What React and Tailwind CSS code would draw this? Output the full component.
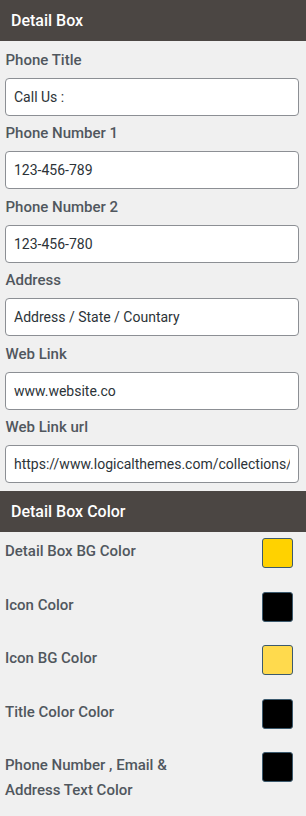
import React from 'react';

const fields = [
  { label: 'Phone Title', value: 'Call Us :' },
  { label: 'Phone Number 1', value: '123-456-789' },
  { label: 'Phone Number 2', value: '123-456-780' },
  { label: 'Address', value: 'Address / State / Countary' },
  { label: 'Web Link', value: 'www.website.co' },
  { label: 'Web Link url', value: 'https://www.logicalthemes.com/collections/' },
];

const colors = [
  { label: 'Detail Box BG Color', color: 'bg-[#ffd200]' },
  { label: 'Icon Color', color: 'bg-black' },
  { label: 'Icon BG Color', color: 'bg-[#ffda4d]' },
  { label: 'Title Color Color', color: 'bg-black' },
  { label: 'Phone Number , Email & Address Text Color', color: 'bg-black' },
];

const SectionHeader = ({ title }) => (
  <div className="h-[41px] bg-[#4b4643] px-[11px] flex items-center">
    <h2 className="text-[16px] font-medium text-white">{title}</h2>
  </div>
);

export default function App() {
  return (
    <div
      className="w-[306px] min-h-[816px] bg-[#f0f0f0] text-[#50575e]"
      style={{ fontFamily: 'Roboto, "Liberation Sans", sans-serif' }}
    >
      <SectionHeader title="Detail Box" />
      <div className="px-[5px] pt-[8.5px]">
        {fields.map((f) => (
          <div key={f.label}>
            <label className="block pl-[0.5px] h-[28px] leading-[20px] text-[15px] font-medium text-[#50575e]">
              {f.label}
            </label>
            <input
              readOnly
              value={f.value}
              className="block w-[294px] h-[38px] mb-[7.6px] bg-white border border-[#8c8f94] rounded-[4px] px-[8px] text-[14px] text-[#2c3338] outline-none"
            />
          </div>
        ))}
      </div>
      <SectionHeader title="Detail Box Color" />
      <div className="pl-[5px] pr-[13px] pt-[6px]">
        {colors.map((c) => (
          <div key={c.label} className="flex justify-between items-start min-h-[53.5px]">
            <span className="w-[190px] pt-[1px] text-[15px] leading-[25px] font-medium text-[#50575e]">
              {c.label}
            </span>
            <span className={`w-[31px] h-[30px] rounded-[3px] border border-[#3c5a6e] ${c.color}`} />
          </div>
        ))}
      </div>
    </div>
  );
}
